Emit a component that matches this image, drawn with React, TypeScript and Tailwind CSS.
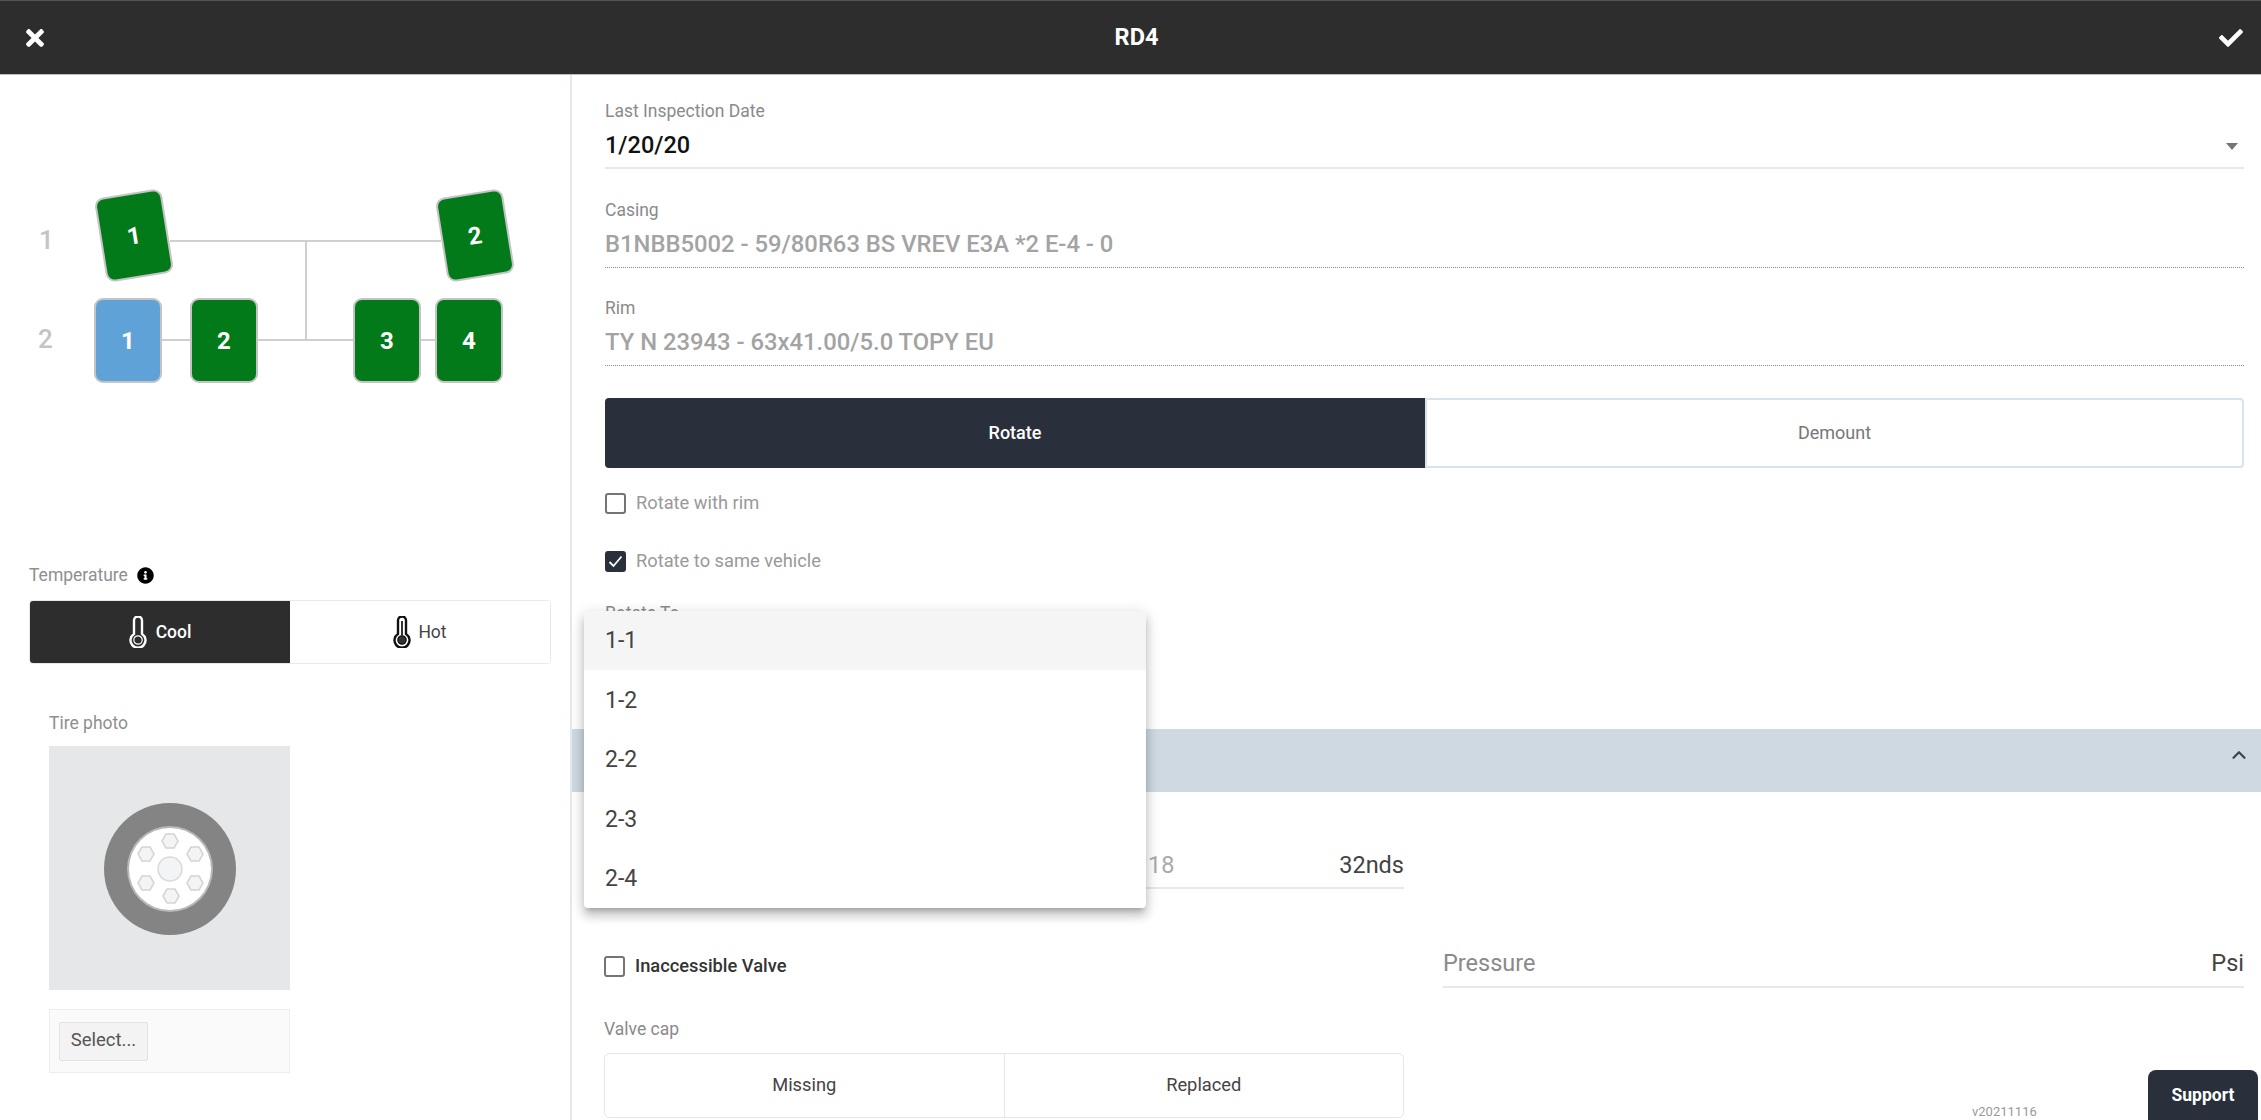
import { ChevronUp } from 'lucide-react'
import { FaCheck, FaInfoCircle, FaTimes } from 'react-icons/fa'

const bolts = [
  [0, -28],
  [-24, -15],
  [25, -15],
  [-24, 14],
  [25, 14],
  [1, 27],
]

const options = ['1-1', '1-2', '2-2', '2-3', '2-4']

function hexPoints(cx: number, cy: number, r: number) {
  return [0, 60, 120, 180, 240, 300]
    .map((a) => `${cx + r * Math.cos((a * Math.PI) / 180)},${cy + r * Math.sin((a * Math.PI) / 180)}`)
    .join(' ')
}

function Thermometer({ color, fill }: { color: string; fill: string }) {
  return (
    <svg width="18" height="32" viewBox="0 0 18 32" fill="none">
      <path
        d="M5 4.5a4 4 0 0 1 8 0v13.4a7.5 7.5 0 1 1-8 0z"
        stroke={color}
        strokeWidth="2.4"
        fill="none"
      />
      <circle cx="9" cy="24" r="4.2" fill={fill} stroke={color} strokeWidth="1.2" />
      <rect x="8" y="5" width="2" height="15" fill={fill === 'none' ? 'none' : fill} />
    </svg>
  )
}

function Tire({
  n,
  className,
  blue,
}: {
  n: number
  className: string
  blue?: boolean
}) {
  return (
    <div
      className={`absolute flex h-[85px] w-[68px] items-center justify-center rounded-[9px] border-2 border-[#c4c4c4] text-[24px] font-bold text-white ${
        blue ? 'bg-[#5fa2d8]' : 'bg-[#037a19]'
      } ${className}`}
    >
      {n}
    </div>
  )
}

function Check({ checked, className }: { checked?: boolean; className?: string }) {
  return (
    <span
      className={`flex h-[21px] w-[21px] shrink-0 items-center justify-center rounded-[3px] border-2 ${
        checked ? 'border-[#2a303b] bg-[#2a303b]' : 'border-[#757575] bg-white'
      } ${className ?? ''}`}
    >
      {checked && (
        <svg width="15" height="13" viewBox="0 0 15 13" fill="none">
          <path d="M1.5 7l4 4L13.5 1.5" stroke="white" strokeWidth="1.8" />
        </svg>
      )}
    </span>
  )
}

export default function App() {
  return (
    <div className="relative h-[1120px] w-[2261px] overflow-hidden bg-white font-['Roboto',sans-serif]">
      <header className="flex h-[75px] items-center justify-between border-b border-b-[#bdbdbd] border-t border-t-[#555] bg-[#2d2d2d] pl-[25px] pr-[17px] text-white">
        <FaTimes className="h-[26px] w-[20px]" />
        <h1 className="ml-[10px] text-[23.5px] font-bold">RD4</h1>
        <FaCheck className="h-[24px] w-[26px]" />
      </header>

      <div className="flex h-[1045px]">
        <aside className="w-[572px] shrink-0 border-r-2 border-r-[#e3e9f0]">
          {/* axle diagram */}
          <div className="relative h-[481px]">
            <span className="absolute left-[39px] top-[146px] text-[26px] font-medium text-[#c4c4c4]">1</span>
            <span className="absolute left-[38px] top-[245px] text-[26px] font-medium text-[#c4c4c4]">2</span>

            <div className="absolute left-[170px] top-[165px] h-[2px] w-[271px] bg-[#cfcfcf]" />
            <div className="absolute left-[305px] top-[165px] h-[100px] w-[2px] bg-[#cfcfcf]" />
            <div className="absolute left-[160px] top-[264px] h-[2px] w-[276px] bg-[#cfcfcf]" />

            <Tire n={1} className="left-[100px] top-[118px] -rotate-[9deg]" />
            <Tire n={2} className="left-[441px] top-[118px] -rotate-[9deg]" />
            <Tire n={1} blue className="left-[94px] top-[223px]" />
            <Tire n={2} className="left-[190px] top-[223px]" />
            <Tire n={3} className="left-[353px] top-[223px]" />
            <Tire n={4} className="left-[435px] top-[223px]" />
          </div>

          <div className="pl-[29px] pr-[20px]">
            <div className="flex h-[44px] items-center gap-[9px] pb-[5px] text-[17.5px] text-[#8f8f8f]">
              Temperature
              <FaInfoCircle className="h-[17px] w-[17px] text-black" />
            </div>
            <div className="flex h-[64px] w-[522px] overflow-hidden rounded-[4px] border border-[#e8e8e8] text-[17.5px]">
              <button className="flex flex-1 items-center justify-center gap-[9px] bg-[#2d2d2d] font-medium text-white">
                <Thermometer color="white" fill="none" />
                Cool
              </button>
              <button className="flex flex-1 items-center justify-center gap-[7px] bg-white text-[#444]">
                <Thermometer color="#111" fill="#333" />
                Hot
              </button>
            </div>

            <div className="ml-[20px] w-[241px] pt-[46px]">
              <div className="flex h-[24px] items-center pt-[2px] text-[17.5px] text-[#8f8f8f]">Tire photo</div>
              <div className="mt-[12px] flex h-[244px] items-center justify-center bg-[#e6e7e9] pt-[2px]">
                <svg width="134" height="134" viewBox="-67 -67 134 134">
                  <circle r="66" fill="#848484" />
                  <circle r="43" fill="#b8b8b8" />
                  <circle r="41" fill="#ffffff" />
                  <circle r="12" fill="#f2f4f5" stroke="#d9d9d9" strokeWidth="1.5" />
                  {bolts.map(([x, y]) => (
                    <polygon
                      key={`${x}-${y}`}
                      points={hexPoints(x, y, 8)}
                      fill="#f2f4f5"
                      stroke="#d4d4d4"
                      strokeWidth="1.5"
                    />
                  ))}
                </svg>
              </div>
              <div className="mt-[19px] flex h-[64px] items-center border border-[#eeeeee] bg-[#fafafa] pl-[9px]">
                <button className="h-[39px] w-[89px] rounded-[2px] border border-[#e2e2e2] bg-[#f3f3f3] text-[18.5px] text-[#555]">
                  Select...
                </button>
              </div>
            </div>
          </div>
        </aside>

        <main className="min-w-0 flex-1">
          <div className="pl-[33px] pr-[17px]">
            <div className="mt-[24px] flex h-[24px] items-center text-[17.5px] text-[#8a8a8a]">
              Last Inspection Date
            </div>
            <div className="flex h-[46px] items-center justify-between border-b-2 border-b-[#e8e8e8] pr-[6px] pt-[2px] text-[23.5px] font-medium text-[#111]">
              1/20/20
              <span className="h-0 w-0 border-x-[6.5px] border-t-[7px] border-x-transparent border-t-[#757575]" />
            </div>

            <div className="mt-[29px] flex h-[24px] items-center text-[17.5px] text-[#8a8a8a]">Casing</div>
            <div className="flex h-[46px] items-center border-b border-dotted border-b-[#8a8a8a] text-[23.8px] font-medium text-[#a3a3a3]">
              B1NBB5002 - 59/80R63 BS VREV E3A *2 E-4 - 0
            </div>

            <div className="mt-[28px] flex h-[24px] items-center text-[17.5px] text-[#8a8a8a]">Rim</div>
            <div className="flex h-[46px] items-center border-b border-dotted border-b-[#8a8a8a] text-[23.8px] font-medium text-[#a3a3a3]">
              TY N 23943 - 63x41.00/5.0 TOPY EU
            </div>

            <div className="mt-[32px] flex h-[70px] text-[18px]">
              <button className="w-[820px] rounded-l-[4px] bg-[#2a303b] pb-[2px] font-medium text-white">Rotate</button>
              <button className="flex-1 rounded-r-[4px] border-2 border-[#d9e3ea] bg-white pb-[2px] text-[#777]">
                Demount
              </button>
            </div>

            <label className="mt-[24px] flex h-[22px] items-center gap-[10px] text-[18.3px] text-[#999]">
              <Check />
              Rotate with rim
            </label>
            <label className="mt-[36px] flex h-[22px] items-center gap-[10px] text-[18.3px] text-[#999]">
              <Check checked />
              Rotate to same vehicle
            </label>

            <div className="mt-[29px] flex h-[24px] items-center text-[17.5px] text-[#8a8a8a]">Rotate To</div>
          </div>

          <div className="mt-[104px] flex h-[63px] items-center justify-end bg-[#cfd9e1] pr-[11px] text-[#444]">
            <ChevronUp className="mb-[12px] h-[22px] w-[22px]" strokeWidth={2.5} />
          </div>

          <div className="grid grid-cols-[800px_801px] gap-x-[39px] pl-[32px]">
            <div className="col-span-2 w-[800px] pt-[52px]">
              <div className="flex h-[45px] items-center justify-between border-b-2 border-b-[#e8e8e8] pl-[544px] text-[23.5px]">
                <span className="text-[#aaa]">18</span>
                <span className="text-[#444]">32nds</span>
              </div>
            </div>
            <label className="mt-[66px] flex h-[22px] items-center gap-[10px] text-[18.3px] font-medium text-[#333]">
              <Check />
              Inaccessible Valve
            </label>
            <div className="mt-[52px] flex h-[47px] items-center justify-between border-b-2 border-b-[#e8e8e8] text-[23.5px]">
              <span className="text-[#8a8a8a]">Pressure</span>
              <span className="text-[#444]">Psi</span>
            </div>
            <div>
              <div className="mt-[29px] flex h-[24px] items-center text-[17.5px] text-[#8a8a8a]">Valve cap</div>
              <div className="mt-[12px] flex h-[65px] rounded-[5px] border border-[#e6e6e6] text-[18.3px] text-[#444]">
                <button className="flex-1 border-r border-r-[#e6e6e6] pb-[2px]">Missing</button>
                <button className="flex-1 pb-[2px]">Replaced</button>
              </div>
            </div>
          </div>
        </main>
      </div>

      {/* open select menu */}
      <ul className="absolute left-[584px] top-[611px] w-[562px] overflow-hidden rounded-[4px] bg-white text-[23px] text-[#444] shadow-[0_5px_5px_-3px_rgba(0,0,0,0.2),0_8px_10px_1px_rgba(0,0,0,0.14),0_3px_14px_2px_rgba(0,0,0,0.12)]">
        {options.map((option, i) => (
          <li
            key={option}
            className={`flex h-[59.4px] items-center pl-[21px] pt-[2px] ${i === 0 ? 'bg-[#f5f5f5]' : ''}`}
          >
            {option}
          </li>
        ))}
      </ul>

      <span className="absolute left-[1972px] top-[1102px] text-[13px] text-[#999]">v20211116</span>
      <button className="absolute bottom-0 right-[3px] flex h-[50px] w-[110px] items-center justify-center rounded-t-[8px] bg-[#2a303b] text-[17.5px] font-bold text-white">
        Support
      </button>
    </div>
  )
}
